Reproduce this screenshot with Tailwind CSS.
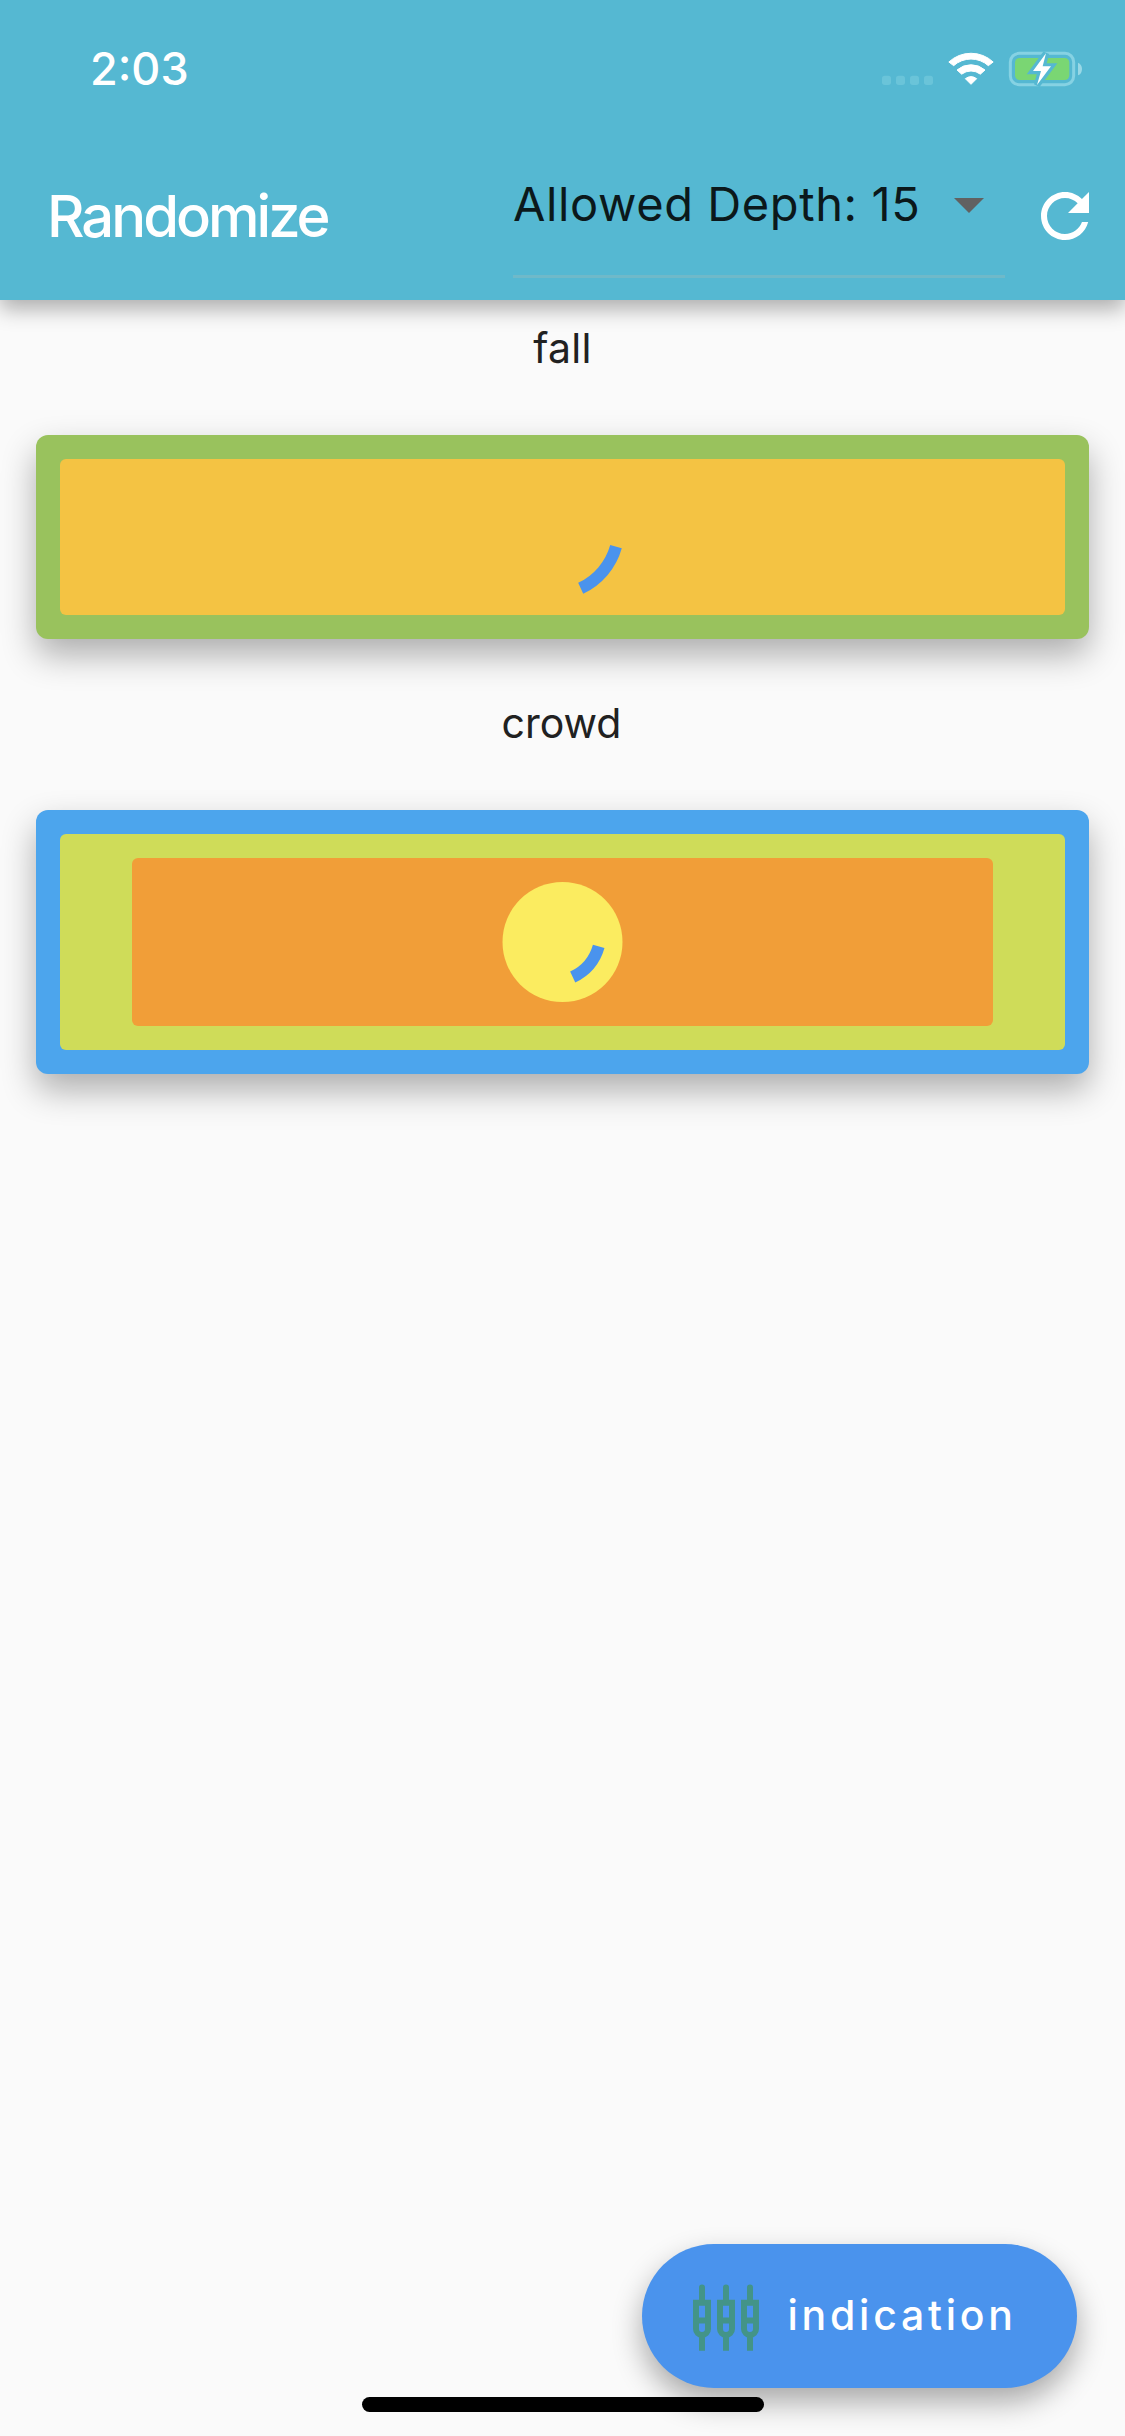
<!DOCTYPE html>
<html lang="en">
<head>
<meta charset="utf-8">
<title>Randomize</title>
<script src="https://cdn.jsdelivr.net/npm/@tailwindcss/browser@4"></script>
</head>
<body class="bg-[#fafafa]">
<div class="relative flex h-[2436px] w-[1125px] flex-col overflow-hidden bg-[#fafafa] font-['Inter',sans-serif] text-[#212121]">
  <header class="relative h-[300px] shrink-0 bg-[#55b8d2] shadow-[0_9px_20px_rgba(0,0,0,0.31)]">
    <div class="flex h-[132px] items-start justify-between pl-[90px]">
      <span class="mt-[41px] text-[45px] leading-[56px] font-medium text-white">2:03</span>
      <svg class="mt-[30px] h-[90px] w-[265px]" viewBox="0 0 795 270">
        <g fill="#6ac4d9"><rect x="66" y="137" width="27" height="28" rx="8"/><rect x="108" y="137" width="27" height="28" rx="8"/><rect x="150" y="137" width="27" height="28" rx="8"/><rect x="192" y="137" width="27" height="28" rx="8"/></g>
        <g fill="#fff" stroke="#fff" stroke-width="3" stroke-linejoin="round">
          <path d="M266.500 96A97.500 97.500 0 0 1 399.500 96L385 107A78 78 0 0 0 281 107Z"/>
          <path d="M291 120A64 64 0 0 1 375 120L361 132.500A46 46 0 0 0 305 132.500Z"/>
          <path d="M316 146A29 29 0 0 1 350 146L333 163Z"/>
        </g>
        <rect x="451" y="70" width="190" height="94" rx="26" fill="none" stroke="#86d2e3" stroke-width="9"/>
        <rect x="465" y="84" width="163" height="66" rx="14" fill="#7ad673"/>
        <path d="M654 98C670 103 670 131 654 136Z" fill="#99d8e6"/>
        <path d="M558 70L519 123H543L531 165L573 109H548Z" fill="#55b8d2" stroke="#55b8d2" stroke-width="19"/>
        <path d="M558 70L519 123H543L531 165L573 109H548Z" fill="#fff"/>
      </svg>
    </div>
    <div class="flex h-[168px] items-start pl-[47px]">
      <h1 class="mt-[48px] w-[466px] text-[58px] leading-[72px] font-medium tracking-[-3px] whitespace-nowrap text-white">Randomize</h1>
      <div class="flex h-[146px] w-[492px] items-start justify-between border-b-[3px] border-[#6fb9c9] pr-[21px]">
        <span class="mt-[42px] text-[47px] leading-[60px] tracking-[0.6px] whitespace-nowrap text-[#0b181b]">Allowed Depth: 15</span>
        <svg class="mt-[66px] h-[15px] w-[30px]" viewBox="0 0 30 15"><path d="M0 0H30L15 15Z" fill="#616161"/></svg>
      </div>
      <svg class="mt-[48px] ml-[24px] size-[72px]" viewBox="0 0 24 24" fill="#fff"><path d="M17.650 6.350C16.200 4.900 14.210 4 12 4c-4.420 0-7.990 3.580-7.990 8s3.570 8 7.990 8c3.730 0 6.840-2.550 7.730-6h-2.080c-.820 2.330-3.040 4-5.650 4-3.310 0-6-2.690-6-6s2.690-6 6-6c1.660 0 3.140.690 4.220 1.780L13 11h7V4l-2.350 2.350z"/></svg>
    </div>
  </header>

  <main class="flex flex-col px-[36px]">
    <p class="mt-[21px] text-center text-[41px] leading-[54px] tracking-[0.3px]">fall</p>
    <section class="mt-[60px] h-[204px] rounded-[12px] bg-[#99c25d] p-[24px] shadow-[0_16px_34px_rgba(0,0,0,0.31)]">
      <div class="flex h-[156px] items-center justify-center rounded-[6px] bg-[#f4c343]">
        <svg class="size-[120px]" viewBox="503 477 120 120"><path d="M616 546.700A65.300 65.300 0 0 1 580.700 588.300" fill="none" stroke="#4a93ed" stroke-width="12"/></svg>
      </div>
    </section>
    <p class="mt-[57px] pr-[2px] text-center text-[41px] leading-[54px]">crowd</p>
    <section class="mt-[60px] h-[264px] rounded-[12px] bg-[#4ca5ed] p-[24px] shadow-[0_16px_34px_rgba(0,0,0,0.31)]">
      <div class="h-[216px] rounded-[6px] bg-[#cfdc59] px-[72px] py-[24px]">
        <div class="flex h-[168px] items-center justify-center rounded-[6px] bg-[#f19e38]">
          <svg class="size-[120px] overflow-visible" viewBox="503 882 120 120"><circle cx="562.500" cy="942" r="60" fill="#fbec60"/><path d="M598.700 946.300A48.500 48.500 0 0 1 572.700 977" fill="none" stroke="#4a93ed" stroke-width="12"/></svg>
        </div>
      </div>
    </section>
  </main>

  <button class="absolute top-[2244px] left-[642px] flex h-[144px] w-[435px] items-center rounded-full bg-[#4a93ed] pl-[48px] text-white shadow-[0_14px_30px_rgba(0,0,0,0.33)]">
    <svg class="size-[72px]" viewBox="0 0 72 72" fill="none" stroke="#439488" stroke-width="6">
      <g id="plug"><path d="M12 20V7.500" stroke-linecap="round"/><path d="M6 22.700H18V49A6 6 0 0 1 6 49ZM6 40.500H18M12 56V70.700"/></g>
      <use href="#plug" x="24"/><use href="#plug" x="48"/>
    </svg>
    <span class="mb-[2px] ml-[25.5px] text-[41px] leading-[54px] font-medium tracking-[3.75px]">indication</span>
  </button>
  <div class="absolute top-[2397px] left-[362px] h-[15px] w-[402px] rounded-full bg-black"></div>
</div>
</body>
</html>
